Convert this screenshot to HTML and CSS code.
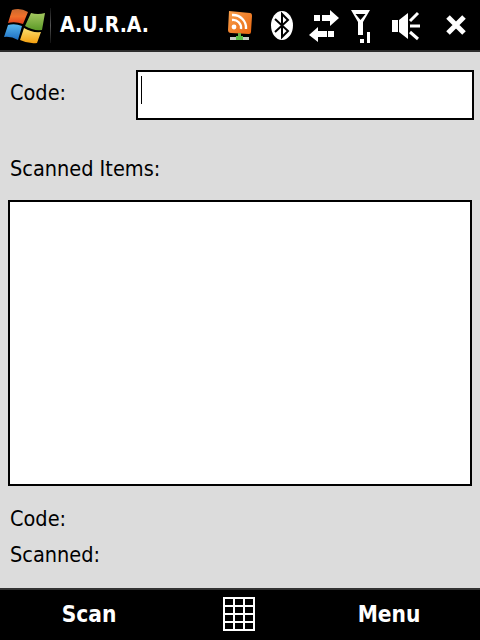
FILE: index.html
```html
<!DOCTYPE HTML>
<html>
<head>
  <meta charset="UTF-8">
  <title>A.U.R.A.</title>
  <link rel="stylesheet" href="styles.css">
</head>
<body>
  <div class="topBar">
    <svg class="winLogo" width="48" height="50" viewBox="0 0 48 50">
      <defs>
        <linearGradient id="paneRed" x1="0" y1="0" x2="0" y2="1">
          <stop offset="0" stop-color="#c8682e"/><stop offset="0.5" stop-color="#f0702a"/><stop offset="1" stop-color="#e0401c"/>
        </linearGradient>
        <linearGradient id="paneGreen" x1="0" y1="0" x2="0" y2="1">
          <stop offset="0" stop-color="#a4c860"/><stop offset="1" stop-color="#5c9a28"/>
        </linearGradient>
        <linearGradient id="paneBlue" x1="0" y1="0" x2="0" y2="1">
          <stop offset="0" stop-color="#58b8f0"/><stop offset="1" stop-color="#1c6cc0"/>
        </linearGradient>
        <linearGradient id="paneYellow" x1="0" y1="0" x2="0" y2="1">
          <stop offset="0" stop-color="#fce070"/><stop offset="1" stop-color="#f4a010"/>
        </linearGradient>
      </defs>
      <path d="M12 10 Q20 7 28 12 L23 24 Q15 21 8 23 Z" fill="url(#paneRed)"/>
      <path d="M31 13 Q38 15 45 13 L42 30 Q33 31 25 26 Z" fill="url(#paneGreen)"/>
      <path d="M8 25 Q15 23 22 26 L18 40 Q11 36 4 37 Z" fill="url(#paneBlue)"/>
      <path d="M24 28 Q32 33 41 32 L37 43 Q28 44 20 40 Z" fill="url(#paneYellow)"/>
    </svg>
    <div class="divider"></div>
    <div class="appTitle">A.U.R.A.</div>
    <svg class="trayIcons" width="244" height="50" viewBox="224 0 244 50">
      <defs>
        <linearGradient id="rssFill" x1="0" y1="0" x2="1" y2="1">
          <stop offset="0" stop-color="#f9a04c"/><stop offset="1" stop-color="#e8650f"/>
        </linearGradient>
      </defs>
      <!-- rss -->
      <path d="M229 11 L250 13 Q252 13 252 16 L251 32 Q251 34 249 34 L231 33 Q228 33 228 30 Z" fill="url(#rssFill)"/>
      <circle cx="234" cy="27" r="2.400" fill="#fff"/>
      <path d="M232 20 A8 8 0 0 1 241 29 M232 15 A13 13 0 0 1 246 29" fill="none" stroke="#fff" stroke-width="2.400"/>
      <rect x="238" y="33" width="3" height="4" fill="#6ab04a"/>
      <rect x="236" y="36" width="7" height="4" fill="#5cc04a"/>
      <rect x="230" y="37" width="6" height="3" fill="#c4ccc4"/>
      <rect x="243" y="37" width="6" height="3" fill="#c4ccc4"/>
      <!-- bluetooth -->
      <ellipse cx="282" cy="25.500" rx="11" ry="14.500" fill="#fff"/>
      <path d="M275 19 L288 31 L282 37 V14 L288 20 L275 32" fill="none" stroke="#000" stroke-width="2"/>
      <!-- sync arrows -->
      <path d="M314 15 H320 V21 H314 Z M322 15 H330 V10 L339 18 L330 26 V21 H322 Z" fill="#fff"/>
      <path d="M334 31 H328 V37 H334 Z M327 31 H318 V27 L309 35 L318 42 V37 H327 Z" fill="#fff"/>
      <!-- signal -->
      <path d="M351 10 H370 L363 22 V35 H358 V22 Z M355.500 14 L360.500 20 L365.500 14 Z" fill="#fff" fill-rule="evenodd"/>
      <rect x="360" y="39" width="4" height="4" fill="#fff"/>
      <rect x="367" y="32" width="3" height="11" fill="#fff"/>
      <!-- speaker -->
      <path d="M392 20 H398 V32 H392 Z M399 20 L408 13 V39 L399 32 Z" fill="#fff"/>
      <path d="M410 21 L418 13 M410 26 H420 M410 32 L418 39" stroke="#fff" stroke-width="3" fill="none"/>
      <!-- close -->
      <path d="M448 17 L464 33 M464 17 L448 33" stroke="#fff" stroke-width="5"/>
    </svg>
  </div>

  <div class="content">
    <div class="codeRow">
      <label class="fieldLabel codeLabel">Code:</label>
      <div class="codeBox"><span class="caret"></span></div>
    </div>
    <div class="fieldLabel itemsLabel">Scanned Items:</div>
    <div class="itemsList"></div>
    <div class="fieldLabel resultLine">Code:</div>
    <div class="fieldLabel resultLine">Scanned:</div>
  </div>

  <div class="bottomBar">
    <div class="softKey scanKey">Scan</div>
    <svg class="keyboardIcon" width="32" height="34" viewBox="0 0 32 34">
      <path d="M1 1 H31 V33 H1 Z M1 9 H31 M1 17 H31 M1 25 H31 M11 1 V33 M21 1 V33" fill="none" stroke="#fff" stroke-width="2"/>
    </svg>
    <div class="softKey menuKey">Menu</div>
  </div>
</body>
</html>
```

FILE: styles.css
```css
* {
  box-sizing: border-box;}
html, body {
  height: 100%;
  margin: 0;}
body {
  display: flex;
  flex-direction: column;
  background-color: #dcdcdc;
  color: #000;
  font-family: 'DejaVu Sans Condensed', 'DejaVu Sans', sans-serif;
  font-size: 21.5px;}
.topBar {
  height: 52px;
  flex: none;
  display: flex;
  align-items: center;
  background-color: #000;
  border-bottom: 2px solid #2e2e2e;}
.winLogo {
  flex: none;}
.divider {
  width: 1px;
  height: 35px;
  margin: 0 9px 0 2px;
  background: linear-gradient(#111, #555 50%, #111);}
.appTitle {
  color: #fff;
  font-weight: bold;
  font-size: 21px;}
.trayIcons {
  margin-left: auto;
  margin-right: 12px;
  flex: none;}
.content {
  flex: 1;
  padding: 18px 6px 0 8px;}
.fieldLabel {
  line-height: 30px;
  padding-left: 2px;}
.codeRow {
  display: flex;
  align-items: center;}
.codeLabel {
  width: 128px;
  margin-bottom: 4px;}
.codeBox {
  flex: 1;
  height: 50px;
  padding: 4px 3px;
  background-color: #fff;
  border: 2px solid #000;}
.caret {
  display: block;
  width: 1px;
  height: 28px;
  background-color: #000;}
.itemsLabel {
  margin-top: 34px;}
.itemsList {
  height: 286px;
  width: 464px;
  margin-top: 16px;
  margin-bottom: 18px;
  background-color: #fff;
  border: 2px solid #000;}
.resultLine {
  margin-bottom: 6px;}
.bottomBar {
  height: 52px;
  flex: none;
  display: flex;
  align-items: center;
  padding-bottom: 3px;
  background-color: #000;
  border-top: 2px solid #333;}
.softKey {
  text-align: center;
  color: #fff;
  font-weight: bold;
  font-size: 22.5px;}
.scanKey {
  width: 178px;}
.menuKey {
  width: 180px;
  margin-left: 44px;}
.keyboardIcon {
  flex: none;
  margin-left: 45px;}
```
